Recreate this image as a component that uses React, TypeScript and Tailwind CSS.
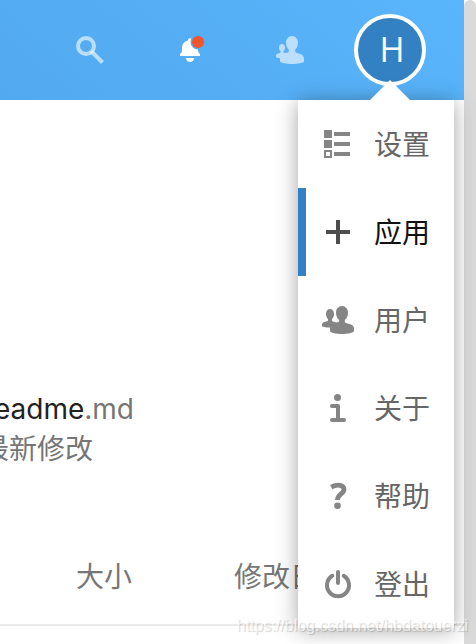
import type { ReactNode } from "react";

function SearchIcon() {
  return (
    <svg className="size-7" viewBox="0 0 28 28" fill="none" stroke="currentColor" aria-hidden="true">
      <circle cx="10" cy="10" r="8" strokeWidth="4" />
      <path d="M15.500 15.500 L26.500 26.500" strokeWidth="4" />
    </svg>
  );
}

function BellIcon() {
  return (
    <svg className="size-8" viewBox="0 0 32 32" aria-hidden="true">
      <path
        fill="currentColor"
        d="M14 6c0-2.500 4-2.500 4 0v.6c4 1 6 4 6 7.400 0 4 .6 5 2 6v2H6v-2c1.500-1 2-2 2-6 0-3.400 2-6.400 6-7.400zM12 24h8c0 2.600-1.800 4-4 4s-4-1.400-4-4z"
      />
      <circle cx="24" cy="8" r="7.500" fill="#55acf3" />
      <circle cx="24" cy="8" r="6" fill="#f0552b" />
    </svg>
  );
}

function ContactsIcon() {
  return (
    <svg className="size-7" viewBox="0 0 28 28" fill="currentColor" aria-hidden="true">
      <path d="M16 0c3.600 0 6 3 6 6.500 0 3-1 5.200-2.800 7.300v1.700c0 1 1.800 1.500 4.300 2.200 3 .8 4.500 2.800 4.500 5.500v2.300c-1 3.300-23 3.300-24 0v-3.300c-2 0-3.600-.5-4-1.200v-1.500C.2 18.300 1.500 17.500 3.200 17.200c1-.3 1.500-.7 1.500-1.700C3.500 14.300 3 13.200 3 11.500 3 9.500 4.200 8 6 8s3 1.500 3 3.500c0 1.700-.5 2.800-1.700 4v.8c1 .9 3.400.8 5.500-.3V13.800C11 11.700 10 9.500 10 6.500 10 3 12.400 0 16 0z" />
    </svg>
  );
}

function SettingsIcon() {
  return (
    <svg className="size-8" viewBox="0 0 32 32" fill="currentColor" aria-hidden="true">
      <path d="M2 2h8v8H2zM12 4h16v4H12zM2 12h8v8H2zM12 14h16v4H12zM12 24h16v4H12z" />
      <path fillRule="evenodd" d="M2 22h8v8H2zM4 24v4h4v-4z" />
    </svg>
  );
}

function PlusIcon() {
  return (
    <svg className="size-8" viewBox="0 0 32 32" fill="currentColor" aria-hidden="true">
      <path d="M14 4h4v10h10v4H18v10h-4V18H4v-4h10z" />
    </svg>
  );
}

function UsersIcon() {
  return (
    <svg className="size-8" viewBox="0 0 32 32" fill="currentColor" aria-hidden="true">
      <path d="M20 2c3.600 0 6 3 6 6.500 0 3-1 5.500-3.200 7.500v2c0 .9 1.500 1.300 4.700 2 3 .7 4.500 2.300 4.500 4.500v2.500c-1 4-23 4-24 0v-3.500c-3.500 0-7-.3-8-1.200V20.500c0-1.500 1-2.200 2.700-2.600C4.800 17.400 6 17.300 6 16.500V15c-1.300-1.200-2-2.800-2-5 0-3 1.500-5 4-5s4 2 4 5c0 2.200-.7 3.800-2 5v1.500c0 .8 1 1.200 3 1.700l1.300.4c2-.5 2.900-.8 2.900-1.600v-1C15 14 14 11.500 14 8.500 14 5 16.400 2 20 2z" />
    </svg>
  );
}

function InfoIcon() {
  return (
    <svg className="size-8" viewBox="0 0 32 32" aria-hidden="true">
      <circle cx="15.500" cy="5.500" r="3.500" fill="currentColor" />
      <path d="M10 14h6v14M10 28h12" fill="none" stroke="currentColor" strokeWidth="4" strokeLinecap="round" strokeLinejoin="round" />
    </svg>
  );
}

function HelpIcon() {
  return (
    <svg className="size-8" viewBox="0 0 32 32" aria-hidden="true">
      <path d="M9.200 7.200C15.500 3.700 22 5 22 9.500c0 4.500-6.500 4.500-6.500 10.500" fill="none" stroke="currentColor" strokeWidth="4.800" />
      <circle cx="15.500" cy="25.700" r="3.300" fill="currentColor" />
    </svg>
  );
}

function PowerIcon() {
  return (
    <svg className="size-8" viewBox="0 0 32 32" fill="none" stroke="currentColor" strokeWidth="4" strokeLinecap="round" aria-hidden="true">
      <path d="M16 4v11M10.300 7.800a11 11 0 1 0 11.400 0" />
    </svg>
  );
}

const menu: { label: string; icon: ReactNode; active?: boolean }[] = [
  { label: "设置", icon: <SettingsIcon /> },
  { label: "应用", icon: <PlusIcon />, active: true },
  { label: "用户", icon: <UsersIcon /> },
  { label: "关于", icon: <InfoIcon /> },
  { label: "帮助", icon: <HelpIcon /> },
  { label: "登出", icon: <PowerIcon /> },
];

export default function App() {
  return (
    <div className="relative flex min-h-screen overflow-hidden bg-white font-['Inter','Noto_Sans_CJK_SC',sans-serif] text-[28px] leading-10 text-[#767676]">
      <div className="relative flex min-w-0 flex-1 flex-col">
        <header className="relative flex h-[100px] items-center justify-end bg-linear-40 from-[#52a9ef] to-[#59b5fc] pr-6 text-white">
          <button aria-label="搜索" className="flex h-full w-[100px] items-center justify-center text-white/60">
            <SearchIcon />
          </button>
          <button aria-label="通知" className="flex h-full w-[100px] items-center justify-center">
            <BellIcon />
          </button>
          <button aria-label="联系人" className="flex h-full w-[100px] items-center justify-center text-white/60">
            <ContactsIcon />
          </button>
          <button aria-label="账户" aria-expanded="true" className="flex h-full w-[100px] items-center justify-center">
            <span className="flex size-[72px] items-center justify-center rounded-full border-4 border-white bg-[#3380c3] pb-0.5 pl-1 font-['Open_Sans',sans-serif] text-[34px]">
              H
            </span>
          </button>
        </header>

        <main className="flex flex-1 flex-col">
          <section className="pt-[289px]">
            <a href="#readme" className="flex w-[134px] justify-end whitespace-nowrap">
              <span className="text-[#222]">Readme</span>.md
            </a>
            <p className="flex w-[93px] justify-end whitespace-nowrap">最新修改</p>
          </section>
          <table className="mt-[56px] w-full table-fixed border-b-2 border-[#ebebeb] text-left">
            <thead>
              <tr className="h-[100px] whitespace-nowrap">
                <th className="w-[234px] pt-1 pl-[76px] font-normal">大小</th>
                <th className="pt-1 font-normal">修改日期</th>
              </tr>
            </thead>
          </table>
        </main>

        <nav aria-label="账户菜单" className="absolute top-[100px] right-[10px] w-[156px] bg-white shadow-[0_2px_20px_rgba(0,0,0,0.36)]">
          <svg className="absolute right-11 bottom-full h-5 w-10" viewBox="0 0 40 20" fill="white" aria-hidden="true">
            <path d="M0 20 20 0l20 20z" />
          </svg>
          <ul>
            {menu.map(({ label, icon, active }) => (
              <li key={label}>
                <a
                  href="#menu"
                  className={
                    active
                      ? "flex h-[88px] items-center gap-5 border-l-8 border-[#3381c4] pl-4 text-[#111]"
                      : "flex h-[88px] items-center gap-5 border-l-8 border-transparent pl-4 text-[#666]"
                  }
                >
                  <span className={active ? "text-[#4d4d4d]" : "text-[#858585]"}>{icon}</span>
                  <span className="pt-0.5">{label}</span>
                </a>
              </li>
            ))}
          </ul>
        </nav>
      </div>

      <div className="w-3 shrink-0 rounded-t-full bg-[#dadada]" />
      <p className="absolute right-2 bottom-1.5 font-['Liberation_Sans',sans-serif] text-base leading-6 text-white/70 [text-shadow:1px_1px_1px_rgba(0,0,0,0.18)]">
        https://blog.csdn.net/hbdatouerzi
      </p>
    </div>
  );
}
